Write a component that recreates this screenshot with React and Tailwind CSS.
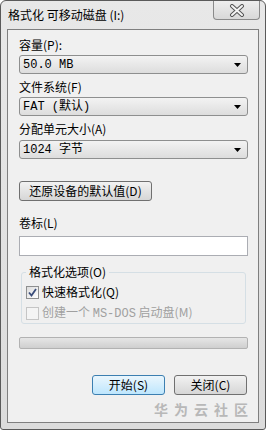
import React from "react";

const F = { fontFamily: '"Noto Sans CJK SC", "Liberation Sans", sans-serif' };
const M = { fontFamily: '"Liberation Mono", "Noto Sans CJK SC", monospace' };

function Combo({ children }) {
  return (
    <div className="flex h-[19px] items-center justify-between rounded-[3px] border border-[#8e8f8f] bg-gradient-to-b from-[#f3f3f3] to-[#dddddd] pl-[3px] pr-[6px] text-[12px] leading-none text-black">
      <span className="whitespace-pre" style={M}>{children}</span>
      <svg width="7" height="4" viewBox="0 0 7 4"><path d="M0 0h7L3.5 4z" fill="#000" /></svg>
    </div>
  );
}

function Btn({ children, w, def }) {
  return (
    <div
      className={
        "flex h-[20px] items-center justify-center rounded-[3px] border text-[12px] leading-none text-black " +
        w +
        (def
          ? " border-[#3c7fb1] bg-gradient-to-b from-[#eaf6fd] to-[#bee6fd]"
          : " border-[#707070] bg-gradient-to-b from-[#f2f2f2] to-[#d6d6d6]")
      }
    >
      {children}
    </div>
  );
}

export default function App() {
  return (
    <div className="h-[431px] w-[267px] bg-white" style={F}>
      <div className="flex h-[430px] w-[266px] flex-col rounded-t-[6px] rounded-b-[3px] border border-[#5a5a5a] bg-gradient-to-b from-[#e8e8e8] to-[#dcdcdc]">
        <div className="flex h-[28px] items-start justify-between">
          <div className="pl-[7px] pt-[7px] text-[12px] leading-[14px] text-black">格式化 可移动磁盘 (I:)</div>
          <div className="mr-[5px] flex h-[19px] w-[47px] items-center justify-center rounded-b-[4px] border border-t-0 border-[#8a8a8a] bg-gradient-to-b from-[#eeeeee] to-[#d8d8d8]">
            <svg width="16" height="13" viewBox="0 0 16 13">
              <path d="M3 2l10 9M13 2L3 11" stroke="#555" strokeWidth="4" strokeLinecap="round" />
              <path d="M3 2l10 9M13 2L3 11" stroke="#f4f4f4" strokeWidth="2" strokeLinecap="round" />
            </svg>
          </div>
        </div>
        <div className="mx-[6px] mb-[6px] flex flex-1 flex-col border border-[#7f7f7f] bg-[#f0f0f0] pl-[11px] pr-[10px] pt-[8px] text-[12px] leading-[14px] text-black">
          <div>容量(P):</div>
          <div className="mt-[3px]"><Combo>50.0 MB</Combo></div>
          <div className="mt-[6px]">文件系统(F)</div>
          <div className="mt-[3px]"><Combo>FAT (默认)</Combo></div>
          <div className="mt-[6px]">分配单元大小(A)</div>
          <div className="mt-[4px]"><Combo>1024 字节</Combo></div>
          <div className="mt-[22px]"><Btn w="w-[133px]">还原设备的默认值(D)</Btn></div>
          <div className="mt-[15px]">卷标(L)</div>
          <div className="mt-[6px] h-[20px] border border-[#abadb3] bg-white" />
          <div className="relative mx-[2px] mt-[16px] h-[52px] rounded-[3px] border border-[#d5dfe5]">
            <div className="absolute left-[4px] top-[-8px] bg-[#f0f0f0] px-[3px] leading-[14px]">格式化选项(O)</div>
            <div className="flex flex-col gap-[6px] pl-[4px] pt-[12px]">
              <div className="flex items-center gap-[3px]">
                <div className="flex h-[13px] w-[13px] items-center justify-center border border-[#8e8f8f] bg-gradient-to-br from-[#dcdcdc] to-white">
                  <svg width="9" height="9" viewBox="0 0 9 9"><path d="M1 4.5l2.5 3L8 1" stroke="#3a4d7a" strokeWidth="1.8" fill="none" /></svg>
                </div>
                <span>快速格式化(Q)</span>
              </div>
              <div className="flex items-center gap-[3px] text-[#a0a0a0]">
                <div className="h-[13px] w-[13px] border border-[#c5c5c5] bg-[#f4f4f4]" />
                <span>创建一个 <span style={M}>MS-DOS</span> 启动盘(M)</span>
              </div>
            </div>
          </div>
          <div className="mt-[13px] h-[12px] rounded-[2px] border border-[#b2b2b2] bg-gradient-to-b from-[#e6e6e6] to-[#cfcfcf]" />
          <div className="mt-[26px] flex justify-end gap-[9px] pr-[1px]">
            <Btn w="w-[73px]" def>开始(S)</Btn>
            <Btn w="w-[73px]">关闭(C)</Btn>
          </div>
          <div className="mt-[6px] flex justify-end gap-[6px] pr-[-2px] text-[14px] font-bold leading-[16px] text-[#b8b8b8]">
            <span>华</span><span>为</span><span>云</span><span>社</span><span>区</span>
          </div>
        </div>
      </div>
    </div>
  );
}
